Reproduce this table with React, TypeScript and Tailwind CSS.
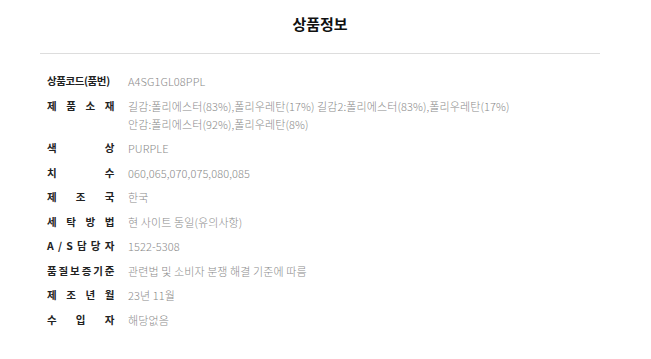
const rows: { label: string; value: string[] }[] = [
  { label: "상품코드(품번)", value: ["A4SG1GL08PPL"] },
  {
    label: "제품소재",
    value: [
      "길감:폴리에스터(83%),폴리우레탄(17%) 길감2:폴리에스터(83%),폴리우레탄(17%)",
      "안감:폴리에스터(92%),폴리우레탄(8%)",
    ],
  },
  { label: "색상", value: ["PURPLE"] },
  { label: "치수", value: ["060,065,070,075,080,085"] },
  { label: "제조국", value: ["한국"] },
  { label: "세탁방법", value: ["현 사이트 동일(유의사항)"] },
  { label: "A/S담당자", value: ["1522-5308"] },
  { label: "품질보증기준", value: ["관련법 및 소비자 분쟁 해결 기준에 따름"] },
  { label: "제조년월", value: ["23년 11월"] },
  { label: "수입자", value: ["해당없음"] },
];

// spread short labels letter by letter; the one with parens stays whole
const glyphs = (s: string) => (s.includes("(") ? [s] : Array.from(s));

export default function App() {
  return (
    <div className="min-h-[359px] bg-white font-['Noto_Sans_CJK_KR','Noto_Sans',sans-serif]">
      <div className="ml-[40px] w-[560px] pt-[14px]">
        <h2 className="text-center text-[15px] leading-[20px] font-bold text-[#111]">상품정보</h2>
        <div className="mt-[19px] h-px bg-[#dddddd]" />
        <div className="mt-[18px] flex flex-col gap-[6.5px] pl-[7px]">
          {rows.map((r) => (
            <div key={r.label} className="flex items-start">
              <div className="flex w-[67px] shrink-0 justify-between whitespace-nowrap text-[10.5px] leading-[18px] font-bold tracking-[-0.4px] text-[#222]">
                {glyphs(r.label).map((g, i) => (
                  <span key={i}>{g}</span>
                ))}
              </div>
              <div className="ml-[14px] whitespace-nowrap text-[11px] leading-[18px] tracking-[0.1px] text-[#8a8a8a] font-light">
                {r.value.map((v) => (
                  <div key={v}>{v}</div>
                ))}
              </div>
            </div>
          ))}
        </div>
      </div>
    </div>
  );
}
